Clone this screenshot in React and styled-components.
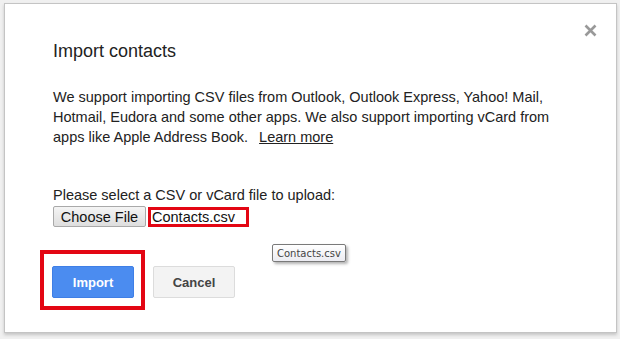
import styled, { createGlobalStyle } from "styled-components";

const Global = createGlobalStyle`
  html, body {
    margin: 0;
    padding: 0;
    background: #f0f0f0;
    font-family: Arial, "Liberation Sans", sans-serif;
  }
`;

const Pagina = styled.div`
  width: 620px;
  height: 339px;
  padding: 3px 0 0 4px;
  box-sizing: border-box;
  overflow: hidden;
`;

const Dialogo = styled.div`
  position: relative;
  width: 613px;
  height: 330px;
  box-sizing: border-box;
  background: #fff;
  border: 1px solid #c4c4c4;
  box-shadow: 0 2px 3px rgba(0, 0, 0, 0.18);
  padding: 35px 40px 0 48px;
  color: #222;
`;

const Fechar = styled.button`
  position: absolute;
  top: 16px;
  right: 16px;
  width: 20px;
  height: 20px;
  padding: 0;
  border: 0;
  background: none;
  cursor: pointer;
  display: flex;
  align-items: center;
  justify-content: center;
`;

const Titulo = styled.h2`
  margin: 0;
  font-size: 18px;
  font-weight: normal;
  line-height: 24px;
  color: #222;
`;

const Texto = styled.p`
  margin: 24px 0 0;
  font-size: 14.5px;
  line-height: 20px;
  color: #222;
`;

const Link = styled.a`
  color: #222;
  text-decoration: underline;
  margin-left: 11px;
`;

const Rotulo = styled.div`
  margin-top: 38px;
  font-size: 14.5px;
  line-height: 20px;
  color: #222;
`;

const LinhaArquivo = styled.div`
  display: flex;
  align-items: center;
  gap: 2px;
  margin-top: 1px;
`;

const BotaoArquivo = styled.button`
  height: 21px;
  width: 93px;
  padding: 0;
  font-family: Arial, "Liberation Sans", sans-serif;
  font-size: 14.5px;
  color: #111;
  border: 1px solid #a9a9a9;
  border-radius: 2px;
  background: linear-gradient(#f4f4f4, #dedede);
`;

const Destaque = styled.span`
  display: inline-flex;
  align-items: center;
  box-sizing: border-box;
  height: 20px;
  width: 101px;
  border: 3px solid #e30613;
  padding-left: 1px;
  font-size: 14.5px;
  color: #111;
`;

const LinhaAcoes = styled.div`
  display: flex;
  align-items: flex-start;
  gap: 8px;
  margin: 23px 0 0 -13px;
`;

const Moldura = styled.div`
  border: 4px solid #e30613;
  padding: 12px 7px 8px 8px;
`;

const Botao = styled.button`
  width: 82px;
  height: 32px;
  border-radius: 2px;
  font-family: Arial, "Liberation Sans", sans-serif;
  font-size: 13px;
  font-weight: bold;
  cursor: pointer;
  margin-top: ${p => (p.$solto ? "16px" : "0")};
  color: ${p => (p.$primario ? "#fff" : "#444")};
  background: ${p => (p.$primario ? "#4b8cf0" : "#f3f3f3")};
  border: 1px solid ${p => (p.$primario ? "#3f7fe6" : "#dcdcdc")};
`;

const Dica = styled.div`
  position: absolute;
  left: 267px;
  top: 240px;
  height: 18px;
  padding: 0 4px;
  box-sizing: border-box;
  display: flex;
  align-items: center;
  font-family: "DejaVu Sans", sans-serif;
  font-size: 10px;
  color: #444;
  background: linear-gradient(#ffffff, #ececf2);
  border: 1px solid #7a7a7a;
  border-radius: 2px;
  box-shadow: 2px 2px 3px rgba(0, 0, 0, 0.3);
`;

export default function App() {
  return (
    <>
      <Global />
      <Pagina>
        <Dialogo>
          <Fechar aria-label="Fechar">
            <svg width="13" height="13" viewBox="0 0 13 13">
              <path d="M1.5 1.5 L11.5 11.5 M11.5 1.5 L1.5 11.5" stroke="#999" strokeWidth="2.6" />
            </svg>
          </Fechar>
          <Titulo>Import contacts</Titulo>
          <Texto>
            We support importing CSV files from Outlook, Outlook Express, Yahoo! Mail,
            Hotmail, Eudora and some other apps. We also support importing vCard from
            apps like Apple Address Book.<Link href="#">Learn more</Link>
          </Texto>
          <Rotulo>Please select a CSV or vCard file to upload:</Rotulo>
          <LinhaArquivo>
            <BotaoArquivo>Choose File</BotaoArquivo>
            <Destaque>Contacts.csv</Destaque>
          </LinhaArquivo>
          <LinhaAcoes>
            <Moldura>
              <Botao $primario>Import</Botao>
            </Moldura>
            <Botao $solto>Cancel</Botao>
          </LinhaAcoes>
          <Dica>Contacts.csv</Dica>
        </Dialogo>
      </Pagina>
    </>
  );
}
